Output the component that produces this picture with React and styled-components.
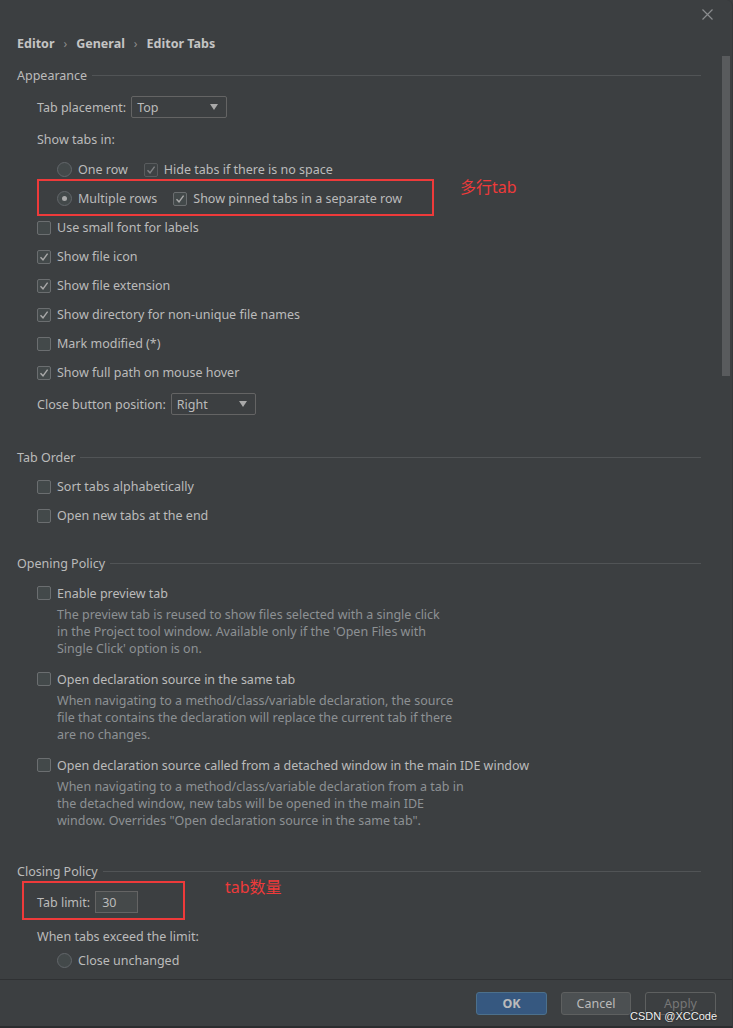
import React from "react";
import styled, { createGlobalStyle, css } from "styled-components";

const Global = createGlobalStyle`
  html, body { margin: 0; padding: 0; background: #3c3f41; }
  body { font-family: "Noto Sans", "Noto Sans CJK SC", sans-serif; font-size: 12.5px; color: #bbbbbb; }
  *, *::before, *::after { box-sizing: border-box; }
`;

const Dialog = styled.div`
  width: 733px;
  height: 1028px;
  display: flex;
  flex-direction: column;
  background: #3c3f41;
  position: relative;
  border-right: 1px solid #35383a;
  border-top-right-radius: 6px;
  overflow: hidden;
`;

const Body = styled.div`
  flex: 1;
  display: flex;
  min-height: 0;
  overflow: hidden;
`;

const Content = styled.div`
  flex: 1;
  padding: 0 21px 0 17px;
  display: flex;
  flex-direction: column;
`;

const ScrollTrack = styled.div`
  width: 10px;
  padding-top: 56px;
`;

const Thumb = styled.div`
  width: 8px;
  height: 320px;
  background: #595b5d;
`;

const TopBar = styled.div`
  height: 28px;
  display: flex;
  justify-content: flex-end;
  align-items: center;
`;

const CloseBtn = styled.svg`
  width: 11px;
  height: 11px;
  margin-right: -12px;
`;

const Breadcrumb = styled.div`
  height: 30px;
  display: flex;
  align-items: center;
  font-weight: 700;
  color: #c4c4c4;
  gap: 9px;
`;

const Chevron = styled.span`
  font-weight: 400;
  color: #8c8c8c;
  font-size: 12px;
`;

const SectionTitle = styled.div`
  height: 20px;
  margin-top: ${(p) => p.$mt}px;
  display: flex;
  align-items: center;
  gap: 5px;
  &::after {
    content: "";
    flex: 1;
    height: 1px;
    background: #515456;
  }
`;

const Row = styled.div`
  position: relative;
  height: ${(p) => p.$h || 29}px;
  margin-top: ${(p) => p.$mt || 0}px;
  padding-left: ${(p) => p.$indent || 20}px;
  display: flex;
  align-items: center;
  gap: 6px;
  color: #bbbbbb;
  ${(p) =>
    p.$frame &&
    css`
      &::after {
        content: "";
        position: absolute;
        left: ${p.$frame.left}px;
        top: ${p.$frame.top}px;
        width: ${p.$frame.width}px;
        height: ${p.$frame.height}px;
        border: 2px solid #ee3a3a;
        pointer-events: none;
      }
    `}
`;

const Annotation = styled.span`
  position: absolute;
  left: ${(p) => p.$left}px;
  top: ${(p) => p.$top}px;
  color: #ee3a3a;
  font-size: 16px;
  line-height: 22px;
  font-family: "Noto Sans", "Noto Sans CJK SC", sans-serif;
  white-space: nowrap;
`;

const Box = styled.span`
  width: 14px;
  height: 14px;
  border: 1px solid ${(p) => (p.$disabled ? "#595c5e" : "#6b6e70")};
  border-radius: 2px;
  background: ${(p) => (p.$disabled ? "#3e4244" : "#43494a")};
  display: inline-flex;
  align-items: center;
  justify-content: center;
  flex-shrink: 0;
`;

const RadioCircle = styled.span`
  width: 15px;
  height: 15px;
  border: 1px solid #62666a;
  border-radius: 50%;
  background: #43494a;
  display: inline-flex;
  align-items: center;
  justify-content: center;
  flex-shrink: 0;
  &::after {
    content: "";
    width: 5px;
    height: 5px;
    border-radius: 50%;
    background: ${(p) => (p.$on ? "#a9a9a9" : "transparent")};
  }
`;

const Label = styled.span`
  white-space: nowrap;
  margin-right: ${(p) => p.$mr || 0}px;
`;

const Combo = styled.div`
  width: ${(p) => p.$w}px;
  height: 22px;
  border: 1px solid #646464;
  border-radius: 2px;
  display: flex;
  align-items: center;
  justify-content: space-between;
  padding: 0 8px 0 5px;
  margin-left: -1px;
`;

const Arrow = styled.span`
  width: 0;
  height: 0;
  border-left: 4.5px solid transparent;
  border-right: 4.5px solid transparent;
  border-top: 6px solid #a9a9a9;
`;

const TextField = styled.div`
  width: 43px;
  height: 22px;
  border: 1px solid #646464;
  background: #45494a;
  display: flex;
  align-items: center;
  padding-left: 6px;
  margin-left: -1px;
`;

const Desc = styled.div`
  margin-top: 2px;
  padding-left: 40px;
  color: #8d9194;
  line-height: 17px;
`;

const Footer = styled.div`
  height: 49px;
  border-top: 1px solid #2f3133;
  border-bottom: 2px solid #2b2d2f;
  display: flex;
  align-items: center;
  justify-content: flex-end;
  gap: 14px;
  padding-right: 16px;
  position: relative;
`;

const Button = styled.div`
  width: ${(p) => p.$w || 71}px;
  height: 23px;
  border-radius: 3px;
  display: flex;
  align-items: center;
  justify-content: center;
  ${(p) =>
    p.$kind === "primary"
      ? css`
          background: #365880;
          border: 1px solid #4c708c;
          color: #bbbbbb;
          font-weight: 700;
        `
      : p.$kind === "disabled"
      ? css`
          background: transparent;
          border: 1px solid #5e6060;
          color: #777777;
        `
      : css`
          background: #4c5052;
          border: 1px solid #5e6060;
          color: #bbbbbb;
        `}
`;

const Watermark = styled.span`
  position: absolute;
  right: 15px;
  bottom: 4px;
  font-family: "Liberation Sans", Arial, sans-serif;
  font-size: 11px;
  color: #f2f2f2;
  text-shadow: 0 0 2px #222, 0 0 1px #222;
  white-space: nowrap;
`;

const Check = ({ color }) => (
  <svg width="10" height="10" viewBox="0 0 10 10">
    <path d="M1.5 5.2 L4 7.8 L8.6 1.6" fill="none" stroke={color} strokeWidth="1.4" />
  </svg>
);

const CheckBox = ({ checked, disabled }) => (
  <Box $disabled={disabled}>{checked && <Check color={disabled ? "#7f8183" : "#a9a9a9"} />}</Box>
);

const CheckRow = ({ label, checked, ...rest }) => (
  <Row {...rest}>
    <CheckBox checked={checked} />
    <Label>{label}</Label>
  </Row>
);

export default function App() {
  return (
    <>
      <Global />
      <Dialog>
        <Body>
          <Content>
            <TopBar>
              <CloseBtn viewBox="0 0 11 11">
                <path d="M0.5 0.5 L10.5 10.5 M10.5 0.5 L0.5 10.5" stroke="#8a8c8e" strokeWidth="1.2" />
              </CloseBtn>
            </TopBar>
            <Breadcrumb>
              <span>Editor</span>
              <Chevron>›</Chevron>
              <span>General</span>
              <Chevron>›</Chevron>
              <span>Editor Tabs</span>
            </Breadcrumb>

            <SectionTitle $mt={7}>Appearance</SectionTitle>
            <Row $h={24} $mt={10}>
              <Label>Tab placement:</Label>
              <Combo $w={96}>
                <span>Top</span>
                <Arrow />
              </Combo>
            </Row>
            <Row $h={24} $mt={8}>
              <Label>Show tabs in:</Label>
            </Row>
            <Row $mt={4} $indent={40}>
              <RadioCircle />
              <Label $mr={10}>One row</Label>
              <CheckBox checked disabled />
              <Label>Hide tabs if there is no space</Label>
            </Row>
            <Row $indent={40} $frame={{ left: 20, top: -5, width: 397, height: 37 }}>
              <RadioCircle $on />
              <Label $mr={10}>Multiple rows</Label>
              <CheckBox checked />
              <Label>Show pinned tabs in a separate row</Label>
              <Annotation $left={443} $top={-8}>多行tab</Annotation>
            </Row>
            <CheckRow label="Use small font for labels" />
            <CheckRow label="Show file icon" checked />
            <CheckRow label="Show file extension" checked />
            <CheckRow label="Show directory for non-unique file names" checked />
            <CheckRow label="Mark modified (*)" />
            <CheckRow label="Show full path on mouse hover" checked />
            <Row $h={24} $mt={5}>
              <Label>Close button position:</Label>
              <Combo $w={85}>
                <span>Right</span>
                <Arrow />
              </Combo>
            </Row>

            <SectionTitle $mt={31}>Tab Order</SectionTitle>
            <CheckRow label="Sort tabs alphabetically" $mt={5} />
            <CheckRow label="Open new tabs at the end" />

            <SectionTitle $mt={23}>Opening Policy</SectionTitle>
            <CheckRow label="Enable preview tab" $h={22} $mt={9} />
            <Desc>
              The preview tab is reused to show files selected with a single click
              <br />
              in the Project tool window. Available only if the 'Open Files with
              <br />
              Single Click' option is on.
            </Desc>
            <CheckRow label="Open declaration source in the same tab" $h={22} $mt={11} />
            <Desc>
              When navigating to a method/class/variable declaration, the source
              <br />
              file that contains the declaration will replace the current tab if there
              <br />
              are no changes.
            </Desc>
            <CheckRow
              label="Open declaration source called from a detached window in the main IDE window"
              $h={22}
              $mt={11}
            />
            <Desc>
              When navigating to a method/class/variable declaration from a tab in
              <br />
              the detached window, new tabs will be opened in the main IDE
              <br />
              window. Overrides "Open declaration source in the same tab".
            </Desc>

            <SectionTitle $mt={32}>Closing Policy</SectionTitle>
            <Row $h={24} $mt={9} $frame={{ left: 5, top: -9, width: 163, height: 39 }}>
              <Label>Tab limit:</Label>
              <TextField>30</TextField>
              <Annotation $left={208} $top={-14}>tab数量</Annotation>
            </Row>
            <Row $h={24} $mt={10}>
              <Label>When tabs exceed the limit:</Label>
            </Row>
            <Row $h={24} $indent={40}>
              <RadioCircle />
              <Label>Close unchanged</Label>
            </Row>
          </Content>
          <ScrollTrack>
            <Thumb />
          </ScrollTrack>
        </Body>
        <Footer>
          <Button $kind="primary">OK</Button>
          <Button $w={70}>Cancel</Button>
          <Button $kind="disabled">Apply</Button>
          <Watermark>CSDN @XCCode</Watermark>
        </Footer>
      </Dialog>
    </>
  );
}
